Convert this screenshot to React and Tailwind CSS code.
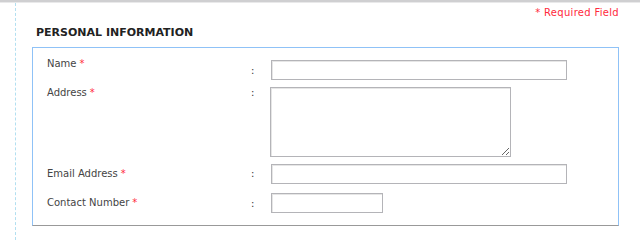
import React from 'react';

// 필드 정의
const font = { fontFamily: '"DejaVu Sans", Verdana, sans-serif' };

function Star() {
  return <span className="text-[#ff2a3c] ml-[3px]">*</span>;
}

function Colon({ top }) {
  return <div className={`w-[20px] shrink-0 leading-[14px] text-[#333] ${top}`}>:</div>;
}

function App() {
  return (
    <div className="w-[640px] h-[240px] bg-white overflow-hidden" style={font}>
      {/* 상단 바 */}
      <div className="h-[2px] bg-[#cfcfd1]" />
      <div className="h-[1px] bg-[#e9e9ea]" />

      <div className="ml-[15px] mr-[21px] border-l border-dashed border-[#b3dff0] pl-[16px] h-[237px]">
        <div className="text-right text-[10px] leading-[12px] text-[#ff2a3c] pt-[4px] tracking-[0.3px]">
          * Required Field
        </div>

        <h2 className="text-[11px] leading-[14px] font-bold text-[#222] pl-[4px] mt-[7px]">
          PERSONAL INFORMATION
        </h2>

        <div className="mt-[7px] h-[179px] border border-[#8fc2f7] border-b-[#999] pl-[14px] pt-[9px] text-[10px] text-[#444]">
          {/* 이름 */}
          <div className="flex">
            <div className="w-[204px] shrink-0 leading-[14px]">Name<Star /></div>
            <Colon top="mt-[7px]" />
            <input className="mt-[3px] w-[296px] h-[20px] border border-[#b4b4b8] shadow-[inset_1px_1px_0_#e6e6e6] outline-none" />
          </div>

          {/* 주소 */}
          <div className="flex mt-[6px]">
            <div className="w-[204px] shrink-0 leading-[14px]">Address<Star /></div>
            <Colon top="mt-0" />
            <textarea className="ml-[-1px] mt-[1px] w-[241px] h-[70px] border border-[#b4b4b8] shadow-[inset_1px_1px_0_#e6e6e6] outline-none" />
          </div>

          {/* 이메일 */}
          <div className="flex mt-[7px]">
            <div className="w-[204px] shrink-0 leading-[14px] mt-[3px]">Email Address<Star /></div>
            <Colon top="mt-[3px]" />
            <input className="w-[296px] h-[20px] border border-[#b4b4b8] shadow-[inset_1px_1px_0_#e6e6e6] outline-none" />
          </div>

          {/* 연락처 */}
          <div className="flex mt-[9px]">
            <div className="w-[204px] shrink-0 leading-[14px] mt-[3px]">Contact Number<Star /></div>
            <Colon top="mt-[4px]" />
            <input className="w-[112px] h-[20px] border border-[#b4b4b8] shadow-[inset_1px_1px_0_#e6e6e6] outline-none" />
          </div>
        </div>
      </div>
    </div>
  );
}

export default App;
